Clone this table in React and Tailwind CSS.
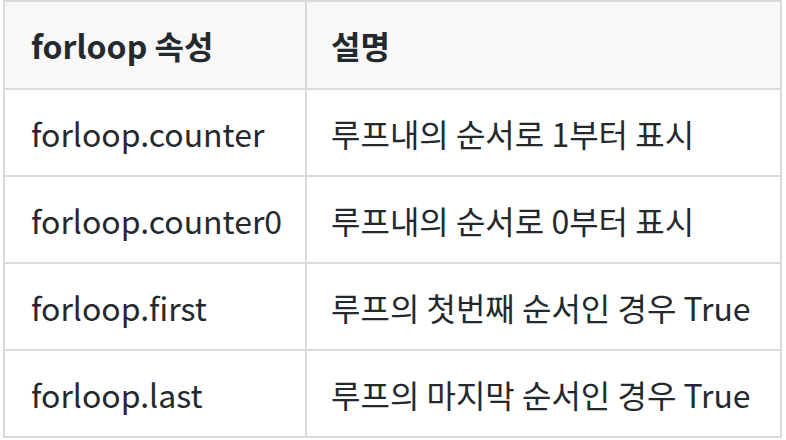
import React from 'react';

const rows = [
  ['forloop.counter', '루프내의 순서로 1부터 표시'],
  ['forloop.counter0', '루프내의 순서로 0부터 표시'],
  ['forloop.first', '루프의 첫번째 순서인 경우 True'],
  ['forloop.last', '루프의 마지막 순서인 경우 True'],
];

function App() {
  return (
    <div className="w-[786px] h-[440px] bg-white pl-[3px] font-['Noto_Sans_CJK_KR',sans-serif] text-[#24292e] text-[32px]">
      <table className="w-[779px] border-collapse border-2 border-[#dadada]">
        <thead>
          <tr className="bg-[#f8f8f8] h-[88px]">
            <th className="w-[302px] border-2 border-[#dadada] pl-[26px] pr-[20px] text-left font-bold">forloop 속성</th>
            <th className="border-2 border-[#dadada] pl-[24px] pr-[20px] text-left font-bold">설명</th>
          </tr>
        </thead>
        <tbody>
          {rows.map((r, i) => (
            <tr key={i} className="h-[87px]">
              <td className="border-2 border-[#dadada] pl-[26px] pr-[20px] whitespace-nowrap">{r[0]}</td>
              <td className="border-2 border-[#dadada] pl-[24px] pr-[20px] whitespace-nowrap">{r[1]}</td>
            </tr>
          ))}
        </tbody>
      </table>
    </div>
  );
}

export default App;
